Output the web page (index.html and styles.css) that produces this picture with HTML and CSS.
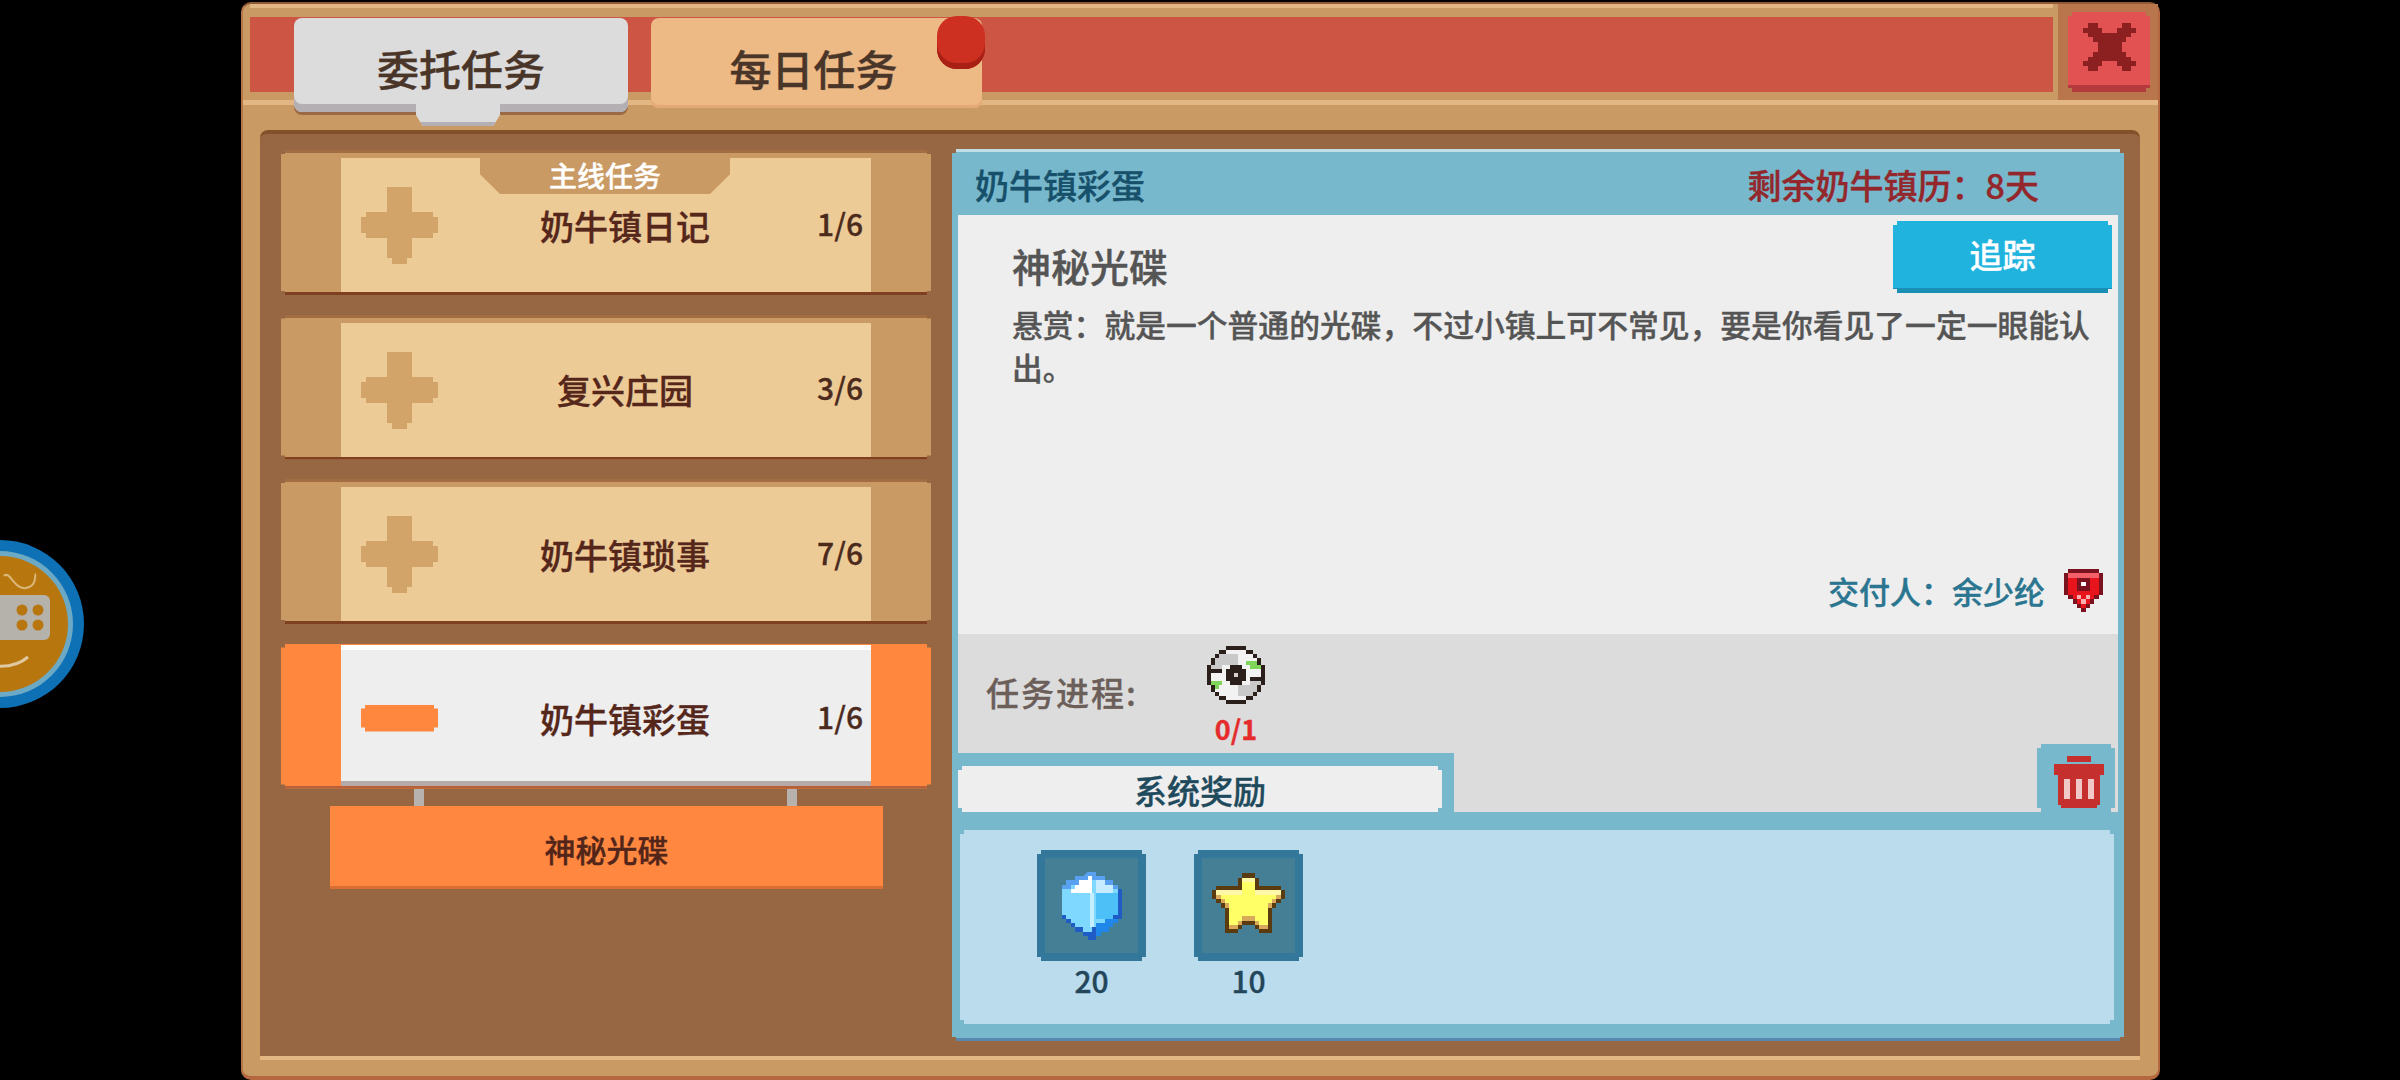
FILE: index.html

```html
<!DOCTYPE html>
<html lang="zh-CN">
<head>
  <meta charset="UTF-8" />
  <title>委托任务</title>
  <link rel="stylesheet" href="styles.css">
</head>
<body>
  <svg class="float-btn" viewBox="0 0 84 168" width="84" height="168">
    <circle cx="0" cy="84" r="84" fill="#0e70b5"/>
    <circle cx="0" cy="84" r="73" fill="#6ba9c4"/>
    <circle cx="0" cy="84" r="68" fill="#b8760f"/>
    <rect x="-10" y="55" width="60" height="45" rx="6" fill="#b5b2ac"/>
    <circle cx="22" cy="70" r="5.5" fill="#b8760f"/>
    <circle cx="38" cy="70" r="5.5" fill="#b8760f"/>
    <circle cx="22" cy="85" r="5.5" fill="#b8760f"/>
    <circle cx="38" cy="85" r="5.5" fill="#b8760f"/>
    <path d="M4 36c6-6 10 14 22 12s8-14 10-14" fill="none" stroke="#d9b878" stroke-width="2"/>
    <path d="M-5 126q20 2 33-9" fill="none" stroke="#e0c8a0" stroke-width="3"/>
  </svg>

  <div class="window">
    <div class="topbar">
      <div class="strip">
        <div class="tab tab-active">委托任务</div>
        <div class="tab tab-daily">每日任务<span class="dot"></span></div>
      </div>
      <div class="close-wrap">
        <div class="close step">
          <svg viewBox="0 0 11 10" width="53" height="48" shape-rendering="crispEdges">
            <path fill="#8c1f20" d="M1 0h2v1h-2zM8 0h2v1h-2zM0 1h4v1h-4zM7 1h4v1h-4zM1 2h9v1h-9zM2 3h7v1h-7zM3 4h5v2h-5zM2 6h7v1h-7zM1 7h9v1h-9zM0 8h4v1h-4zM7 8h4v1h-4zM1 9h2v1h-2zM8 9h2v1h-2z"/>
          </svg>
        </div>
      </div>
    </div>

    <div class="content">
      <div class="quest-list">
        <div class="row step">
          <div class="row-main">
            <svg class="plus" viewBox="0 0 15 15" width="77" height="78" shape-rendering="crispEdges"><path d="M5 0h5v5h4v1h1v3h-1v1h-4v4h-1v1h-3v-1h-1v-4h-4v-1h-1v-3h1v-1h4v-4z"/></svg>
            <span class="row-title">奶牛镇日记</span>
            <span class="row-count">1/6</span>
          </div>
          <div class="row-badge">主线任务</div>
        </div>
        <div class="row step">
          <div class="row-main">
            <svg class="plus" viewBox="0 0 15 15" width="77" height="78" shape-rendering="crispEdges"><path d="M5 0h5v5h4v1h1v3h-1v1h-4v4h-1v1h-3v-1h-1v-4h-4v-1h-1v-3h1v-1h4v-4z"/></svg>
            <span class="row-title">复兴庄园</span>
            <span class="row-count">3/6</span>
          </div>
        </div>
        <div class="row step">
          <div class="row-main">
            <svg class="plus" viewBox="0 0 15 15" width="77" height="78" shape-rendering="crispEdges"><path d="M5 0h5v5h4v1h1v3h-1v1h-4v4h-1v1h-3v-1h-1v-4h-4v-1h-1v-3h1v-1h4v-4z"/></svg>
            <span class="row-title">奶牛镇琐事</span>
            <span class="row-count">7/6</span>
          </div>
        </div>
        <div class="row row-open step">
          <div class="row-main">
            <div class="minus-wrap"><span class="minus step"></span></div>
            <span class="row-title">奶牛镇彩蛋</span>
            <span class="row-count">1/6</span>
          </div>
        </div>
        <div class="links"><span></span><span></span></div>
        <div class="sub-quest">神秘光碟</div>
      </div>

      <div class="detail step">
        <div class="detail-head">
          <span class="detail-name">奶牛镇彩蛋</span>
          <span class="detail-left">剩余奶牛镇历：8天</span>
        </div>
        <div class="detail-body">
          <div class="title-row">
            <h2>神秘光碟</h2>
            <div class="track step">追踪</div>
          </div>
          <p class="desc">悬赏：就是一个普通的光碟，不过小镇上可不常见，要是你看见了一定一眼能认出。</p>
          <div class="giver">
            <span>交付人：余少纶</span>
            <svg viewBox="0 0 9 10" width="39" height="45" shape-rendering="crispEdges">
              <path fill="#7a1220" d="M1 0h7v1h1v5h-1v1h-1v1h-1v1h-1v1h-1v-1h-1v-1h-1v-1h-1v-1h-1v-5h1z"/>
              <path fill="#e8141c" d="M1 1h7v5h-1v1h-1v1h-1v1h-1v-1h-1v-1h-1v-1h-1z"/>
              <path fill="#f4606a" d="M1 1h7v1h-7z"/>
              <path fill="#7a1220" d="M3 2h3v3h-3z"/>
              <path fill="#fff" d="M4 3h1v1h-1z"/>
              <path fill="#f8b0b0" d="M3 6h1v1h-1zM5 6h1v1h-1zM4 7h1v1h-1z"/>
            </svg>
          </div>
        </div>
        <div class="progress">
          <span class="progress-label">任务进程:</span>
          <div class="progress-item">
            <svg viewBox="0 0 15 15" width="58" height="58" shape-rendering="crispEdges">
              <path fill="#2b1f1c" d="M5 0h5v1h2v1h1v1h1v2h1v5h-1v2h-1v1h-1v1h-2v1h-5v-1h-2v-1h-1v-1h-1v-2h-1v-5h1v-2h1v-1h1v-1h2z"/>
              <path fill="#f2f2f2" d="M5 1h5v1h2v1h1v2h1v5h-1v2h-1v1h-2v1h-5v-1h-2v-1h-1v-2h-1v-5h1v-2h1v-1h2z"/>
              <path fill="#c9c9c9" d="M3 2h5v3h-4v2h-3v-2h1v-2h1zM8 10h3v-2h3v2h-1v2h-1v1h-4z"/>
              <path fill="#7fd45a" d="M10 4h3v1h1v1h-3v-1h-1zM1 9h3v1h-1v1h-1v-1h-1z"/>
              <path fill="#2b1f1c" d="M6 5h3v1h1v3h-1v1h-3v-1h-1v-3h1zM1 6h3v1h-3zM11 8h3v1h-3z"/>
              <path fill="#d8d0c8" d="M7 7h1v1h-1z"/>
            </svg>
            <span class="need">0/1</span>
          </div>
        </div>
        <div class="tab-line">
          <div class="reward-tab"><span class="step">系统奖励</span></div>
          <div class="trash step">
            <svg viewBox="0 0 50 52" width="50" height="52" shape-rendering="crispEdges">
              <path fill="#c5302f" d="M13 0h24v6h-24zM0 8h50v11h-50zM4 19h42v30h-3v3h-36v-3h-3z"/>
              <path fill="#f0c8c8" d="M10 23h6v20h-6zM22 23h6v20h-6zM34 23h6v20h-6z"/>
            </svg>
          </div>
        </div>
        <div class="rewards step">
          <div class="reward">
            <div class="slot step">
              <svg viewBox="0 0 14 16" width="60" height="70" shape-rendering="crispEdges">
                <path fill="#1f5cc6" d="M6 0h2v1h2v1h2v1h1v1h1v7h-1v1h-1v1h-1v1h-2v1h-1v1h-2v-1h-1v-1h-2v-1h-1v-1h-1v-1h-1v-7h1v-1h1v-1h2v-1h2z"/>
                <path fill="#7fd8ff" d="M6 1h2v1h2v1h2v1h1v6h-1v1h-1v1h-2v1h-2v1h-2v-1h-2v-1h-1v-1h-1v-1h-1v-6h1v-1h2v-1h2z"/>
                <path fill="#5aa0f0" d="M6 0h2v1h2v1h2v1h1v1h-2v-1h-2v-1h-2v-1h-1v1h-2v1h-2v1h-2v-1h1v-1h2v-1h2z"/>
                <path fill="#fff" d="M6 1h1v4h-5v-1h1v-1h1v-1h2z"/>
                <path fill="#c7ecff" d="M8 2h2v1h2v2h-4z"/>
                <path fill="#4dc0f8" d="M8 5h5v5h-1v1h-4z"/>
                <path fill="#c5efff" d="M6.500 5h1v8h-1z"/>
                <path fill="#1f86ea" d="M8 12h2v-1h3v1h-1v1h-1v1h-2v1h-1z"/>
              </svg>
            </div>
            <span class="reward-num">20</span>
          </div>
          <div class="reward">
            <div class="slot step">
              <svg viewBox="0 0 17 15" width="73" height="65" shape-rendering="crispEdges">
                <polygon fill="#5a3a0f" points="7,0 10,0 10,1 11,1 11,3 16,3 16,4 17,4 17,6 16,6 16,7 15,7 15,8 14,8 14,9 14,14 11,14 11,13 10,13 10,12 7,12 7,13 6,13 6,14 3,14 3,9 3,8 2,8 2,7 1,7 1,6 0,6 0,4 1,4 1,3 6,3 6,1 7,1"/>
                <polygon fill="#d9a95c" points="7,1 10,1 10,4 16,4 16,6 15,6 15,7 14,7 14,8 13,8 13,13 11,13 11,12 10,12 10,11 7,11 7,12 6,12 6,13 4,13 4,8 3,8 3,7 2,7 2,6 1,6 1,4 7,4"/>
                <polygon fill="#ffff66" points="7,1 10,1 10,4 16,4 16,5 15,5 15,6 14,6 14,7 13,7 13,12 11,12 11,11 10,11 10,10 7,10 7,11 6,11 6,12 4,12 4,7 3,7 3,6 2,6 2,5 1,5 1,4 7,4"/>
                <path fill="#fff7a8" d="M7 1h3v1h-3zM1 4h6v1h-6zM10 4h6v1h-6z"/>
              </svg>
            </div>
            <span class="reward-num">10</span>
          </div>
        </div>
      </div>
    </div>
  </div>
</body>
</html>
```

FILE: styles.css

```css
body {
  font-family: "Noto Sans CJK SC", "Noto Sans", sans-serif;
  -webkit-text-stroke: 0.35px;
  margin: 0;
  background: #000;
  width: 2400px;
  height: 1080px;
  overflow: hidden;
  position: relative;
}
h2, p {
  margin: 0;
}
.step {
  clip-path: polygon(4px 0, calc(100% - 4px) 0, calc(100% - 4px) 4px, 100% 4px, 100% calc(100% - 4px), calc(100% - 4px) calc(100% - 4px), calc(100% - 4px) 100%, 4px 100%, 4px calc(100% - 4px), 0 calc(100% - 4px), 0 4px, 4px 4px);
}
.float-btn {
  position: absolute;
  left: 0;
  top: 540px;
}

/* window */
.window {
  box-sizing: border-box;
  width: 1919px;
  height: 1078px;
  margin: 2px 0 0 241px;
  background: #c99a63;
  border-left: 2px solid #b5764a;
  border-right: 2px solid #b5683f;
  border-top: 2px solid #8f5a35;
  border-bottom: 4px solid #b5683f;
  border-radius: 10px;
  display: flex;
  flex-direction: column;
}
.topbar {
  display: flex;
  height: 96px;
  border-bottom: 5px solid #e2b783;
  flex: none;
}
.strip {
  margin: 13px 0 8px 7px;
  flex: 1;
  background: #cc5643;
  display: flex;
  align-items: flex-start;
  gap: 23px;
  padding-left: 44px;
  box-shadow: 0 -9px 0 #c99a63, 0 -13px 0 #e2b783;
}
.close-wrap {
  width: 100px;
  margin-left: 5px;
  background: #b9764d;
  display: flex;
  justify-content: center;
  padding: 8px 0 0 2px;
  box-sizing: border-box;
}
.close {
  width: 82px;
  height: 80px;
  background: #e25253;
  box-shadow: inset 0 -7px 0 #b33a3d;
  display: flex;
  justify-content: center;
  padding-top: 11px;
  box-sizing: border-box;
}
.tab {
  position: relative;
  font-size: 42px;
  font-weight: 500;
  color: #4a3529;
  text-align: center;
  border-radius: 8px;
  box-sizing: border-box;
  margin-top: 1px;
  line-height: 100px;
}
.tab-active {
  width: 334px;
  height: 94px;
  background: #dcdcdc;
  box-shadow: inset 0 -8px 0 #b3afb2, 0 3px 0 #9a6a45;
}
.tab-active::after {
  content: "";
  position: absolute;
  left: 122px;
  bottom: -14px;
  width: 84px;
  height: 22px;
  background: #dcdcdc;
  box-shadow: inset 0 -4px 0 #b3afb2;
  clip-path: polygon(0 0, 100% 0, 100% 50%, 92% 100%, 8% 100%, 0 50%);
}
.tab-daily {
  width: 331px;
  height: 90px;
  padding-right: 6px;
  background: #edb985;
  box-shadow: inset 0 -3px 0 #e3a977;
}
.dot {
  position: absolute;
  right: -3px;
  top: -2px;
  width: 48px;
  height: 53px;
  border-radius: 20px;
  background: #cd3021;
  box-shadow: inset 0 -6px 0 #a81f14;
}

/* main area */
.content {
  flex: 1;
  margin: 25px 18px 16px 17px;
  background: #976642;
  border-top: 4px solid #84502a;
  border-bottom: 4px solid #e2b783;
  border-radius: 8px 8px 0 0;
  display: flex;
  gap: 21px;
  padding: 15px 16px 0 21px;
  box-sizing: border-box;
}
.quest-list {
  width: 650px;
  flex: none;
  display: flex;
  flex-direction: column;
  padding-top: 1px;
}
.row {
  position: relative;
  height: 145px;
  margin-bottom: 19.5px;
  background: #c99a63;
  box-shadow: inset 0 3px 0 #a26d42, inset 0 -3px 0 #7e4021;
  box-sizing: border-box;
  padding: 8px 60px 3px;
  flex: none;
}
.row-main {
  height: 100%;
  background: #edcb97;
  display: flex;
  align-items: center;
  padding: 0 8px 0 20px;
  box-sizing: border-box;
}
.plus {
  fill: #d2a469;
  flex: none;
}
.row-title {
  flex: 1;
  text-align: center;
  font-size: 34px;
  font-weight: 500;
  padding-right: 5px;
  color: #55261a;
}
.row-count {
  font-size: 30px;
  font-weight: 500;
  color: #4b2a1c;
  margin-top: -5px;
}
.row-badge {
  position: absolute;
  left: 199px;
  top: 8px;
  width: 250px;
  height: 36px;
  background: #c99a63;
  clip-path: polygon(0 0, 100% 0, 100% 45%, 92% 100%, 8% 100%, 0 45%);
  color: #fff;
  font-size: 28px;
  font-weight: 500;
  line-height: 34px;
  text-align: center;
}
.row-open {
  background: #ff873e;
  box-shadow: inset 0 -3px 0 #b8603a;
  margin-bottom: 0;
  padding-top: 1px;
}
.row-open .row-main {
  background: #eee;
  box-shadow: inset 0 5px 0 #fff, inset 0 -5px 0 #b5aaa8;
  padding-top: 6px;
}
.minus-wrap {
  width: 77px;
  flex: none;
}
.minus {
  display: block;
  height: 27px;
  background: #ff873e;
}
.links {
  height: 17px;
  display: flex;
  gap: 363px;
  padding-left: 133px;
  flex: none;
}
.links span {
  width: 10px;
  background: #b8b2ae;
}
.sub-quest {
  margin: 0 48px 0 49px;
  height: 83px;
  background: #ff873f;
  box-shadow: inset 0 -3px 0 #d96f33;
  font-size: 31px;
  font-weight: 500;
  color: #52251a;
  line-height: 85px;
  text-align: center;
}

/* right panel */
.detail {
  flex: 1;
  height: 892px;
  background: #77b8cd;
  box-shadow: inset 0 3px 0 #c0dde6, inset 0 -3px 0 #5a87ad;
  display: flex;
  flex-direction: column;
}
.detail-head {
  height: 66px;
  flex: none;
  display: flex;
  justify-content: space-between;
  align-items: center;
  padding: 4px 85px 0 23px;
  box-sizing: border-box;
}
.detail-name {
  font-size: 34px;
  font-weight: 500;
  color: #17506a;
}
.detail-left {
  font-size: 34px;
  font-weight: 500;
  color: #93272b;
}
.detail-body {
  margin: 0 6px;
  height: 419px;
  flex: none;
  box-sizing: border-box;
  background: #eee;
  padding: 6px 6px 0 54px;
  display: flex;
  flex-direction: column;
}
.title-row {
  display: flex;
  justify-content: space-between;
  align-items: flex-start;
}
.title-row h2 {
  font-size: 39px;
  font-weight: 500;
  line-height: 44px;
  padding-top: 22px;
  color: #555;
}
.track {
  width: 219px;
  height: 72px;
  background: #1fb3de;
  box-shadow: inset 0 -5px 0 #1a8fb5;
  color: #fff;
  font-size: 33px;
  font-weight: 500;
  line-height: 66px;
  text-align: center;
}
.desc {
  margin-top: 9px;
  padding-right: 9px;
  font-size: 30.8px;
  line-height: 43px;
  font-weight: 500;
  color: #555;
}
.giver {
  margin-top: auto;
  margin-bottom: 21px;
  padding-right: 9px;
  display: flex;
  justify-content: flex-end;
  align-items: center;
  gap: 19px;
  font-size: 31px;
  font-weight: 500;
  color: #2a7590;
}
.progress {
  margin: 0 6px;
  height: 119px;
  flex: none;
  background: #dcdcdc;
  display: flex;
  align-items: center;
  gap: 74px;
  padding-left: 28px;
}
.progress-label {
  font-size: 33px;
  font-weight: 500;
  letter-spacing: 2px;
  margin-top: -3px;
  color: #6c5f5a;
  width: 147px;
  white-space: nowrap;
}
.progress-item {
  align-self: flex-start;
  padding-top: 12px;
  display: flex;
  flex-direction: column;
  align-items: center;
}
.need {
  font-size: 27px;
  font-weight: 700;
  line-height: 32px;
  margin-top: 9px;
  color: #e52b2b;
}
.tab-line {
  margin: 0 6px;
  height: 59px;
  flex: none;
  background: #dcdcdc;
  display: flex;
  justify-content: space-between;
  align-items: flex-end;
}
.reward-tab {
  width: 496px;
  height: 59px;
  box-sizing: border-box;
  background: #77b8cd;
  padding: 13px 12px 0 0;
}
.reward-tab span {
  display: block;
  height: 46px;
  background: #eee;
  font-size: 33px;
  font-weight: 500;
  color: #1f4a5c;
  line-height: 48px;
  text-align: center;
}
.trash {
  width: 78px;
  height: 68px;
  margin-right: 3px;
  background: #77b8cd;
  display: flex;
  justify-content: flex-end;
  padding: 12px 11px 0 0;
  box-sizing: border-box;
}
.rewards {
  margin: 18px 10px 0 8px;
  height: 194px;
  flex: none;
  box-sizing: border-box;
  background: #bbdced;
  display: flex;
  gap: 48px;
  padding: 20px 0 0 77px;
}
.reward {
  width: 109px;
  display: flex;
  flex-direction: column;
  align-items: center;
}
.slot {
  width: 109px;
  height: 111px;
  box-sizing: border-box;
  background: #447f96;
  box-shadow: inset 0 0 0 8px #33779a;
  display: flex;
  align-items: center;
  justify-content: center;
  flex: none;
}
.reward-num {
  font-size: 30px;
  font-weight: 500;
  color: #23475a;
  line-height: 40px;
  margin-top: -1px;
}
```
